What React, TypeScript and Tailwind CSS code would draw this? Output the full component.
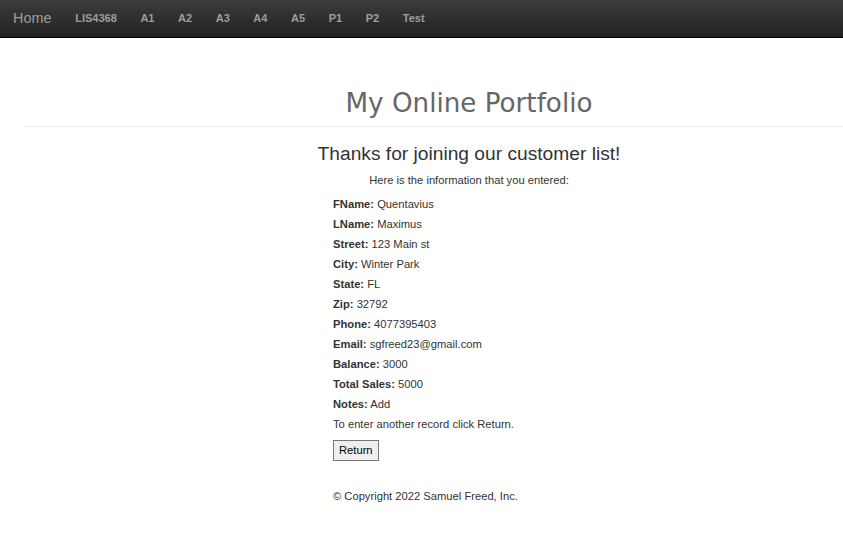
import React from 'react';

const navLinks = ['LIS4368', 'A1', 'A2', 'A3', 'A4', 'A5', 'P1', 'P2', 'Test'];

const fields: [string, string][] = [
  ['FName', 'Quentavius'],
  ['LName', 'Maximus'],
  ['Street', '123 Main st'],
  ['City', 'Winter Park'],
  ['State', 'FL'],
  ['Zip', '32792'],
  ['Phone', '4077395403'],
  ['Email', 'sgfreed23@gmail.com'],
  ['Balance', '3000'],
  ['Total Sales', '5000'],
  ['Notes', 'Add'],
];

const App: React.FC = () => {
  return (
    <div className="min-h-[535px] bg-white text-[#333]" style={{ fontFamily: '"Liberation Sans", Arial, sans-serif' }}>
      {/* Navbar */}
      <nav className="flex h-[38px] items-center border-b border-black bg-gradient-to-b from-[#3c3c3c] to-[#222]">
        <a className="pl-[13px] pr-[12px] text-[14.4px] text-[#9d9d9d]">Home</a>
        {navLinks.map((link) => (
          <a key={link} className="px-[11.8px] text-[11px] font-bold text-[#9d9d9d]">
            {link}
          </a>
        ))}
      </nav>

      {/* Header */}
      <div className="pl-[95px] pt-[47px] text-center">
        <h1 className="text-[26.2px] leading-[36px] text-[#666]" style={{ fontFamily: '"DejaVu Sans", sans-serif' }}>
          My Online Portfolio
        </h1>
      </div>
      <div className="ml-[24px] mt-[5px] border-t border-[#eee]" />

      {/* Content */}
      <div className="pl-[95px]">
        <h2 className="mt-[15px] text-center text-[19.2px] leading-[24px]">Thanks for joining our customer list!</h2>
        <p className="mt-[6px] text-center text-[11.2px] leading-[16px]">Here is the information that you entered:</p>

        <div className="ml-[238px] mt-[6px] text-[11.2px] leading-[20px]">
          {fields.map(([label, value]) => (
            <div key={label}>
              <b>{label}:</b> {value}
            </div>
          ))}
          <div>To enter another record click Return.</div>
          <button className="mt-[6px] border border-[#767676] bg-[#efefef] px-[5px] py-[2px] text-[11.2px] leading-[15px] text-black">
            Return
          </button>
          <p className="mt-[25px]">© Copyright 2022 Samuel Freed, Inc.</p>
        </div>
      </div>
    </div>
  );
};

export default App;
